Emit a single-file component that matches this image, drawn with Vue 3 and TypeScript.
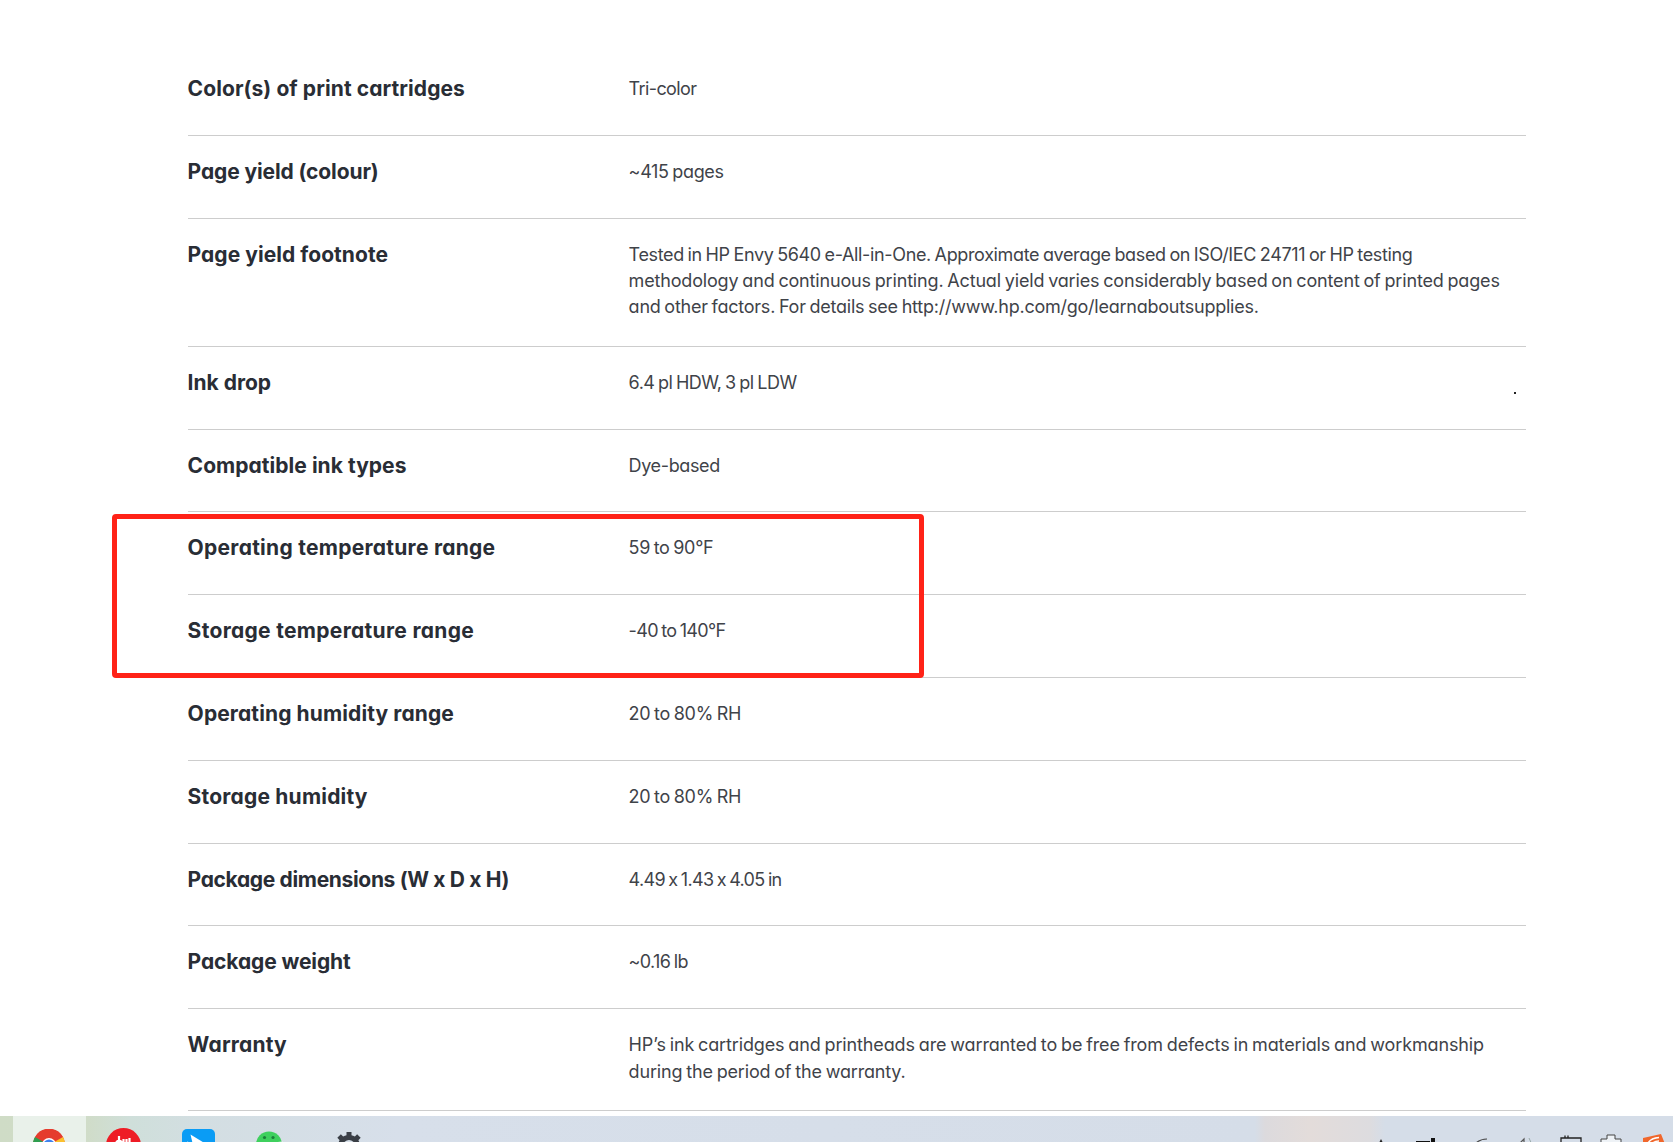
<script setup lang="ts">
interface SpecLine { text: string; ls: number }
interface Spec { label: string; ls: number; lines: SpecLine[] }
const specs: Spec[] = [
  { label: 'Color(s) of print cartridges', ls: 0.08, lines: [{ text: 'Tri-color', ls: -0.62 }] },
  { label: 'Page yield (colour)', ls: -0.12, lines: [{ text: '~415 pages', ls: -0.36 }] },
  { label: 'Page yield footnote', ls: 0.05, lines: [
    { text: 'Tested in HP Envy 5640 e-All-in-One. Approximate average based on ISO/IEC 24711 or HP testing', ls: -0.355 },
    { text: 'methodology and continuous printing. Actual yield varies considerably based on content of printed pages', ls: -0.17 },
    { text: 'and other factors. For details see http://www.hp.com/go/learnaboutsupplies.', ls: -0.24 },
  ] },
  { label: 'Ink drop', ls: 0, lines: [{ text: '6.4 pl HDW, 3 pl LDW', ls: -0.5 }] },
  { label: 'Compatible ink types', ls: 0.04, lines: [{ text: 'Dye-based', ls: -0.37 }] },
  { label: 'Operating temperature range', ls: 0.27, lines: [{ text: '59 to 90°F', ls: -0.34 }] },
  { label: 'Storage temperature range', ls: 0.31, lines: [{ text: '-40 to 140°F', ls: -0.68 }] },
  { label: 'Operating humidity range', ls: 0.11, lines: [{ text: '20 to 80% RH', ls: -0.3 }] },
  { label: 'Storage humidity', ls: 0.2, lines: [{ text: '20 to 80% RH', ls: -0.3 }] },
  { label: 'Package dimensions (W x D x H)', ls: -0.34, lines: [{ text: '4.49 x 1.43 x 4.05 in', ls: -0.68 }] },
  { label: 'Package weight', ls: -0.11, lines: [{ text: '~0.16 lb', ls: -0.65 }] },
  { label: 'Warranty', ls: 0.19, lines: [
    { text: 'HP’s ink cartridges and printheads are warranted to be free from defects in materials and workmanship', ls: -0.135 },
    { text: 'during the period of the warranty.', ls: -0.17 },
  ] },
]
const teeth = [0, 45, 90, 135, 180, 225, 270, 315]
</script>

<template>
  <div class="page">
    <main class="specs">
      <div v-for="s in specs" :key="s.label" class="row">
        <div class="label" :style="{ letterSpacing: s.ls + 'px' }">{{ s.label }}</div>
        <div class="value">
          <div v-for="l in s.lines" :key="l.text" :style="{ letterSpacing: l.ls + 'px' }">{{ l.text }}</div>
        </div>
      </div>
    </main>
    <div class="mark"></div>
    <div class="highlight"></div>
    <footer class="taskbar">
      <div class="tile"></div>
      <svg class="ic chrome" viewBox="0 0 32 32"><circle cx="16" cy="16" r="16" fill="#e53c2e"/><path d="M16 16 30 8a16 16 0 0 1-8 23z" fill="#fbc02d"/><path d="M16 16 22 31A16 16 0 0 1 2 8z" fill="#2e9e4f"/><path d="M2 8A16 16 0 0 1 30 8H16z" fill="#e53c2e"/><circle cx="16" cy="16" r="7" fill="#fff"/><circle cx="16" cy="16" r="5.600" fill="#3f82ee"/></svg>
      <svg class="ic dw" viewBox="0 0 35 35"><circle cx="17.5" cy="17.5" r="17.5" fill="#ee1c25"/><path d="M13 8v9M13 12.500a2.700 2.700 0 1 0 .1 0M17.500 11v6h3v-6M20.500 17h3v-7" stroke="#fff" stroke-width="2.200" fill="none"/></svg>
      <svg class="ic feishu" viewBox="0 0 33 33"><rect width="33" height="33" rx="5" fill="#0a9cf5"/><path d="M8.500 5.500 24 15 15 19 11 16z" fill="#fff"/><path d="M5 12 15 19 10 22z" fill="#bfe4fb"/></svg>
      <svg class="ic wechat" viewBox="0 0 27 27"><ellipse cx="13" cy="13" rx="13" ry="12.500" fill="#3fd05e"/><circle cx="8.500" cy="6.500" r="1.600" fill="#1b7f3a"/><circle cx="17" cy="6.500" r="1.600" fill="#1b7f3a"/><ellipse cx="26" cy="15" rx="9" ry="4.500" fill="#e6eef0"/></svg>
      <svg class="ic gear" viewBox="0 0 28 28">
        <circle cx="14" cy="14" r="8.500" fill="none" stroke="#3a3f46" stroke-width="5"/>
        <rect v-for="a in teeth" :key="a" x="11.500" y="0" width="5" height="5" fill="#3a3f46" :transform="`rotate(${a} 14 14)`"/>
      </svg>
      <svg class="ic tray-dot" viewBox="0 0 8 8"><path d="M4 0 7 6H1z" fill="#222"/></svg>
      <svg class="ic tray-box" viewBox="0 0 22 10"><path d="M0 3h14v7H0zM15 0h4v10h-4z" fill="#111"/></svg>
      <svg class="ic tray-wifi" viewBox="0 0 15 10"><path d="M1 7Q6 1 14 1" fill="none" stroke="#444" stroke-width="1.200"/></svg>
      <svg class="ic tray-vol" viewBox="0 0 19 12"><path d="M1 9 8 2v10" fill="none" stroke="#555" stroke-width="1.200"/><path d="M13 1q3 4 1 8" fill="none" stroke="#9aa" stroke-width="1"/></svg>
      <svg class="ic tray-cal" viewBox="0 0 22 10"><path d="M1 9V3h20v6M5 3V0.500M8 3V.5" fill="none" stroke="#222" stroke-width="1.300"/></svg>
      <svg class="ic tray-pin" viewBox="0 0 22 10"><path d="M1 10V5h6V1h8v4h6v5" fill="#eef2f6" stroke="#444" stroke-width="1"/></svg>
      <svg class="ic tray-app" viewBox="0 0 22 10"><path d="M0 4 18 0l4 10H0z" fill="#f0672c"/><path d="M5 9Q8 4 16 3.500M9 10q2-3 7-3" fill="none" stroke="#fff" stroke-width="1.500"/></svg>
    </footer>
  </div>
</template>

<style>
html, body { margin: 0; background: #fff; }
</style>

<style scoped>
.page {
  position: relative;
  width: 1673px;
  height: 1142px;
  overflow: hidden;
  display: flex;
  flex-direction: column;
  background: #fff;
  font-family: Inter, "Liberation Sans", sans-serif;
  font-feature-settings: "cv11";
  color: #2e3138;
}
.specs { flex: 1; padding: 53px 147px 0 187.6px; }
.row {
  display: grid;
  grid-template-columns: 441px 1fr;
  padding: 23px 0 25px;
  border-bottom: 1px solid #cdcdcd;
  line-height: 26.4px;
}
.label { font-size: 21px; font-weight: 700; color: #292d35; margin-bottom: 7.4px; white-space: nowrap; }
.value { font-size: 18px; word-spacing: -1px; white-space: nowrap; color: #3f4349; }
.mark { position: absolute; left: 1514px; top: 392px; width: 2px; height: 2px; background: #222; }
.highlight {
  position: absolute;
  left: 112px; top: 514px;
  width: 812px; height: 164px;
  box-sizing: border-box;
  border: 5px solid #ff2217;
  border-radius: 4px;
}
.taskbar {
  position: relative;
  height: 26px;
  flex: none;
  overflow: hidden;
  background: linear-gradient(90deg, #cfdcc6 0, #d0dcc8 86px, #cfdfda 130px, #d3dee2 200px, #d7dfea 400px, #d5dde8 1255px, #dcdadd 1265px, #e3dcda 1310px, #dddcdf 1370px, #d5dde8 1385px, #d5dde8 100%);
}
.tile { position: absolute; left: 13px; top: 0; width: 73px; height: 26px; background: #e9f1ea; }
.ic { position: absolute; }
.chrome { left: 33px; top: 13px; width: 32px; height: 32px; }
.dw { left: 106px; top: 12px; width: 35px; height: 35px; }
.feishu { left: 182px; top: 13px; width: 33px; height: 33px; }
.wechat { left: 256px; top: 15px; width: 27px; height: 27px; }
.gear { left: 335px; top: 16px; width: 28px; height: 28px; }
.tray-dot { left: 1377px; top: 23px; width: 8px; height: 8px; }
.tray-box { left: 1416px; top: 22px; width: 22px; height: 10px; }
.tray-wifi { left: 1473px; top: 22px; width: 15px; height: 10px; }
.tray-vol { left: 1516px; top: 21px; width: 19px; height: 12px; }
.tray-cal { left: 1560px; top: 19px; width: 22px; height: 10px; }
.tray-pin { left: 1600px; top: 18px; width: 22px; height: 10px; }
.tray-app { left: 1643px; top: 18px; width: 22px; height: 10px; }
</style>
